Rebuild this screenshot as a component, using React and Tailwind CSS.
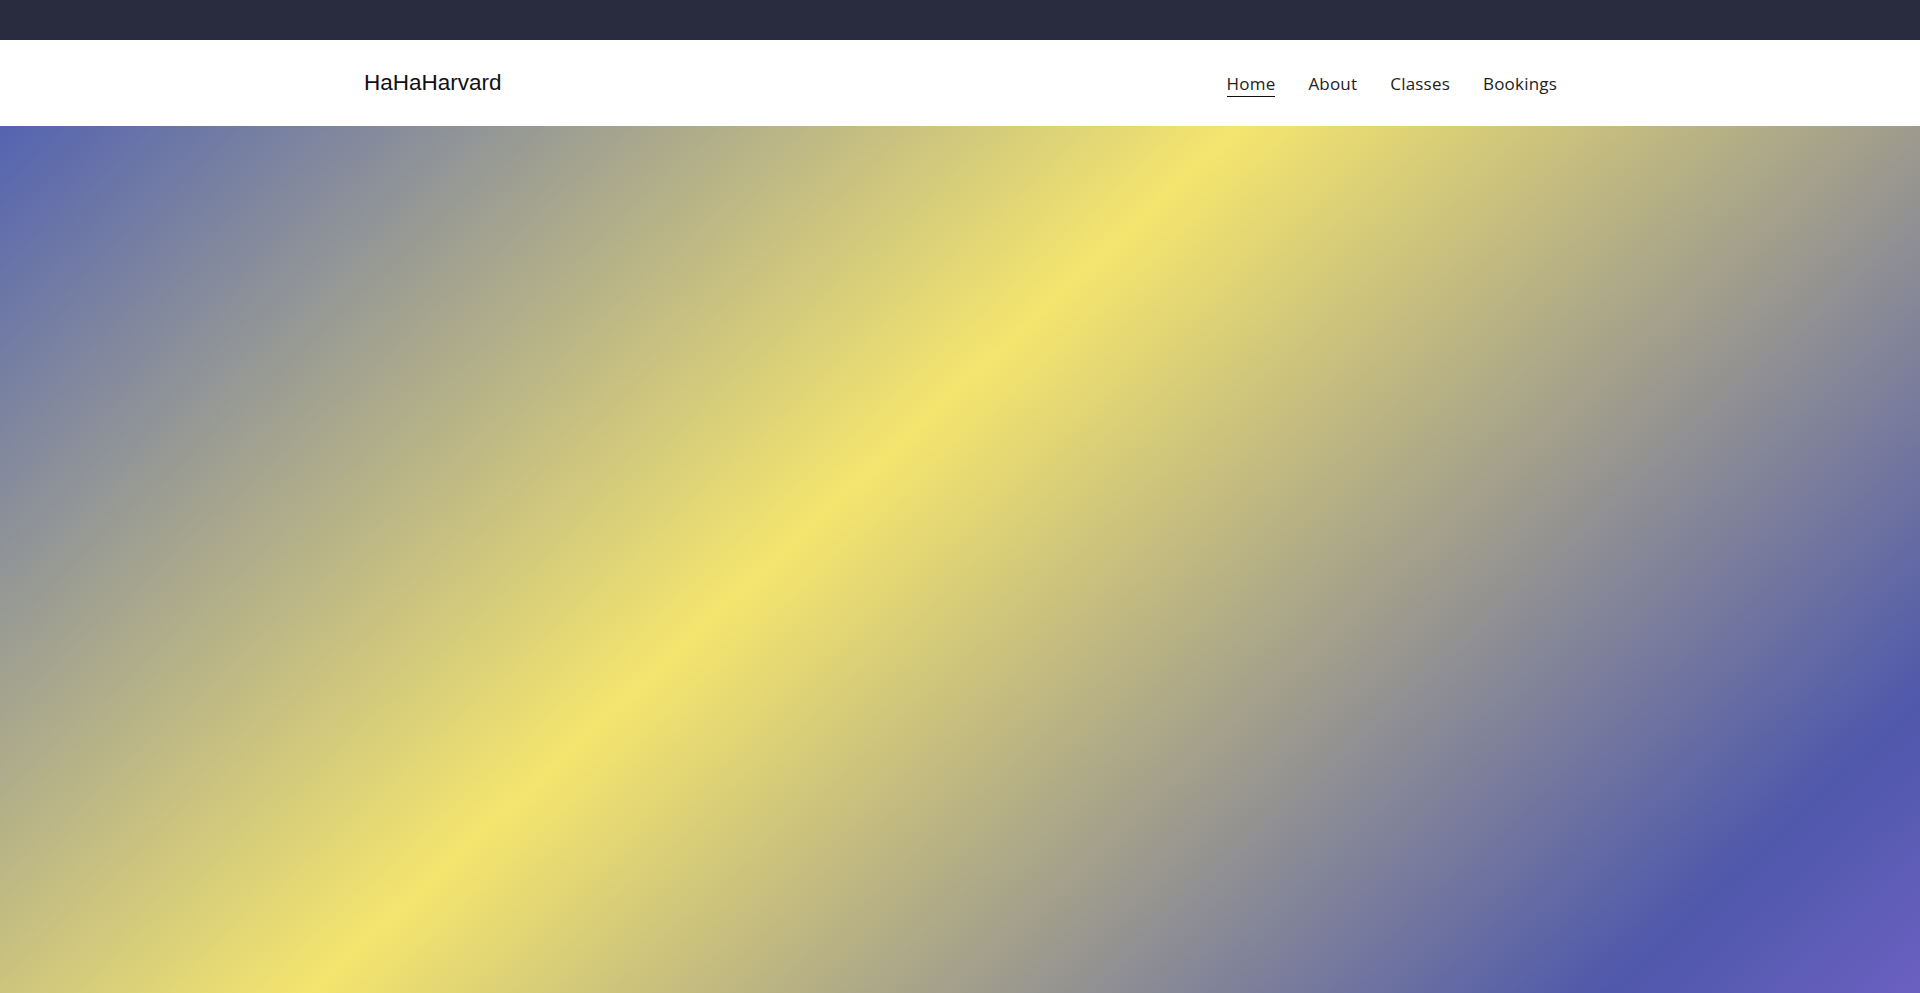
const links = ["Home", "About", "Classes", "Bookings"];

const App = () => {
	return (
		<div className="min-h-screen flex flex-col bg-white">
			{/* top strip */}
			<div className="h-[40px] bg-[#292c3e]" />

			{/* navbar */}
			<nav className="h-[86px] bg-white">
				<div className="max-w-[1200px] mx-auto h-full flex items-center justify-between pl-[4px] pr-[3px]">
					<a className="text-[22.5px] text-[#111] font-['Liberation_Sans',Arial,sans-serif] leading-none">
						HaHaHarvard
					</a>
					<ul className="flex items-center gap-[33px] font-['Open_Sans',sans-serif] font-normal text-[17px] tracking-[0.2px] text-[#222]">
						{links.map((link, i) => (
							<li key={link}>
								<a
									className={
										i === 0
											? "block pt-[3px] pb-[1px] border-b border-[#111] leading-[23px]"
											: "block pt-[3px] pb-[1px] border-b border-transparent leading-[23px]"
									}
								>
									{link}
								</a>
							</li>
						))}
					</ul>
				</div>
			</nav>

			{/* hero gradient */}
			<section className="h-[867px] bg-[linear-gradient(137deg,#5463b0_0%,#f4e56e_43.5%,#4f58ab_89%,#6b60c0_100%)]" />
		</div>
	);
};

export default App;
